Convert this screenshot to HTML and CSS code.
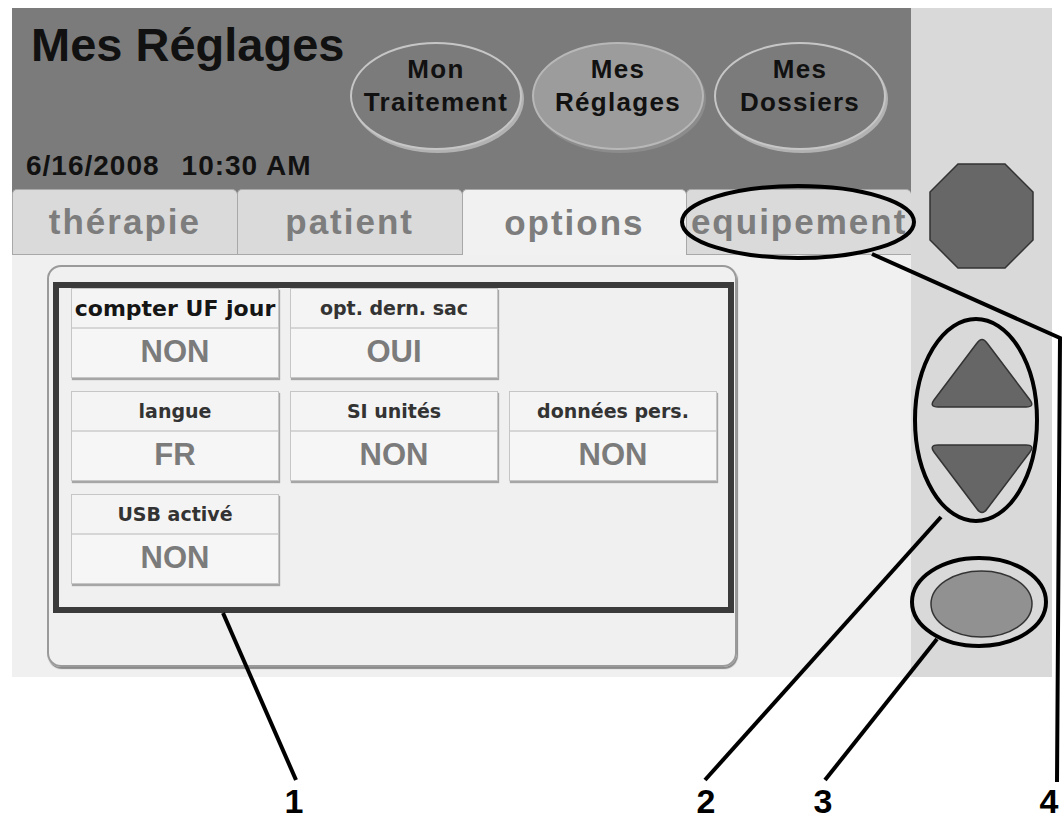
FILE: index.html
```html
<!DOCTYPE html>
<html lang="fr">
<head>
    <meta charset="UTF-8">
    <meta name="viewport" content="width=device-width, initial-scale=1.0">
    <title>Mes Réglages - options</title>
    <link rel="stylesheet" href="styles.css">
</head>
<body>
    <div class="figure">
        <div class="device">
            <div class="screen">
                <header class="topbar">
                    <div class="topbar-row">
                        <h1 class="title">Mes Réglages</h1>
                        <nav class="menu">
                            <div class="menu-btn">Mon<br>Traitement</div>
                            <div class="menu-btn is-current">Mes<br>Réglages</div>
                            <div class="menu-btn">Mes<br>Dossiers</div>
                        </nav>
                    </div>
                    <div class="clock">6/16/2008<span class="time">10:30 AM</span></div>
                </header>

                <div class="tabs">
                    <div class="tab">thérapie</div>
                    <div class="tab">patient</div>
                    <div class="tab is-active">options</div>
                    <div class="tab">equipement</div>
                </div>

                <div class="content">
                    <div class="panel">
                        <div class="frame">
                            <div class="grid">
                                <div class="cell">
                                    <div class="cell-label is-big">compter UF jour</div>
                                    <div class="cell-value">NON</div>
                                </div>
                                <div class="cell">
                                    <div class="cell-label">opt. dern. sac</div>
                                    <div class="cell-value">OUI</div>
                                </div>
                                <div class="cell-empty"></div>
                                <div class="cell">
                                    <div class="cell-label">langue</div>
                                    <div class="cell-value">FR</div>
                                </div>
                                <div class="cell">
                                    <div class="cell-label">SI unités</div>
                                    <div class="cell-value">NON</div>
                                </div>
                                <div class="cell">
                                    <div class="cell-label">données pers.</div>
                                    <div class="cell-value">NON</div>
                                </div>
                                <div class="cell">
                                    <div class="cell-label">USB activé</div>
                                    <div class="cell-value">NON</div>
                                </div>
                            </div>
                        </div>
                    </div>
                </div>
            </div>

            <!-- hardware keys beside the screen -->
            <div class="keys">
                <svg class="key-stop" width="107" height="108" viewBox="0 0 107 108">
                    <polygon points="30,2 77,2 105,30 105,78 77,106 30,106 2,78 2,30" fill="#676767" stroke="#333" stroke-width="1.5"/>
                </svg>
                <svg class="key-up" width="106" height="73" viewBox="0 0 106 73">
                    <path d="M48,7 Q53,0 58,7 L101,64 Q106,71 97,71 L9,71 Q0,71 5,64 Z" fill="#666" stroke="#333" stroke-width="1.5"/>
                </svg>
                <svg class="key-down" width="106" height="73" viewBox="0 0 106 73">
                    <path d="M9,2 L97,2 Q106,2 101,9 L58,66 Q53,73 48,66 L5,9 Q0,2 9,2 Z" fill="#666" stroke="#333" stroke-width="1.5"/>
                </svg>
                <svg class="key-ok" width="105" height="70" viewBox="0 0 105 70">
                    <ellipse cx="52.5" cy="35" rx="50.5" ry="33" fill="#919191" stroke="#333" stroke-width="1.5"/>
                </svg>
            </div>
        </div>

        <!-- numbered callouts drawn over the picture -->
        <svg class="callouts" width="1062" height="823" viewBox="0 0 1062 823">
            <g fill="none" stroke="#000" stroke-width="4">
                <ellipse cx="798" cy="222" rx="116" ry="36"/>
                <polyline points="872,254 1060,338 1057,782"/>
                <ellipse cx="976" cy="420" rx="61" ry="101"/>
                <line x1="941" y1="517" x2="705" y2="780"/>
                <ellipse cx="979" cy="602" rx="67" ry="44"/>
                <line x1="937" y1="639" x2="825" y2="780"/>
                <line x1="223" y1="613" x2="296" y2="780"/>
            </g>
            <g class="callout-num" text-anchor="middle">
                <text x="294" y="813">1</text>
                <text x="706" y="813">2</text>
                <text x="823" y="813">3</text>
                <text x="1049" y="813">4</text>
            </g>
        </svg>
    </div>
</body>
</html>
```

FILE: styles.css
```css
body {
    margin: 0;
    background-color: #ffffff;
    font-family: 'Liberation Sans', Arial, sans-serif;
    overflow: hidden;
}
.figure {
    position: relative;
    width: 1062px;
    height: 823px;
}
.device {
    display: flex;
    padding: 8px 0 0 12px;
}
.screen {
    width: 899px;
    display: flex;
    flex-direction: column;
}

/* top bar */
.topbar {
    height: 181px;
    box-sizing: border-box;
    background-color: #7b7b7b;
    padding: 13px 0 0 14px;
}
.topbar-row {
    display: flex;
}
.title {
    flex: 0 0 324px;
    margin: 0;
    padding-left: 5px;
    box-sizing: border-box;
    font-size: 47px;
    line-height: 1;
    font-weight: bold;
    color: #111;
}
.menu {
    display: flex;
    gap: 10px;
    margin-top: 21px;
}
.menu-btn {
    width: 172px;
    height: 108px;
    box-sizing: border-box;
    border-radius: 50%;
    border: 2px solid #c6c6c6;
    box-shadow: 2px 3px 0 #b2b2b2;
    background-color: #7b7b7b;
    padding-top: 9px;
    text-align: center;
    font-size: 26px;
    line-height: 33px;
    letter-spacing: 1.3px;
    font-weight: bold;
    color: #111;
}
.menu-btn.is-current {
    background-color: #9c9c9c;
    border-color: #b8b8b8;
    box-shadow: 2px 3px 0 #8c8c8c;
}
.clock {
    font-size: 28px;
    line-height: 32px;
    letter-spacing: 1px;
    font-weight: bold;
    color: #111;
}
.time {
    margin-left: 22px;
}

/* tabs */
.tabs {
    display: grid;
    grid-template-columns: repeat(4, 1fr);
    height: 66px;
    background-color: #7b7b7b;
}
.tab {
    display: flex;
    align-items: center;
    justify-content: center;
    overflow: hidden;
    white-space: nowrap;
    background-color: #dadada;
    border: 1px solid #a8a8a8;
    border-right: none;
    border-radius: 5px 5px 0 0;
    font-size: 35px;
    letter-spacing: 2px;
    font-weight: bold;
    color: #7d7d7d;
}
.tab.is-active {
    background-color: #f1f1f1;
    border-bottom: none;
}

/* option cards */
.content {
    height: 422px;
    box-sizing: border-box;
    background-color: #f0f0f0;
    padding: 10px 0 0 35px;
}
.panel {
    width: 690px;
    box-sizing: border-box;
    border: 2px solid #9a9a9a;
    border-radius: 14px;
    box-shadow: 1px 2px 1px #8a8a8a;
    padding: 15px 1px 52px 4px;
}
.frame {
    border: 6px solid #3b3b3b;
    padding: 0 11px 23px 12px;
}
.grid {
    display: grid;
    grid-template-columns: repeat(3, 208px);
    grid-auto-rows: 90px;
    column-gap: 11px;
    row-gap: 13px;
}
.cell {
    display: flex;
    flex-direction: column;
    border: 1px solid #c6c6c6;
    box-shadow: 1px 2px 1px #a6a6a6;
    background-color: #f4f4f4;
}
.cell-label {
    height: 38px;
    display: flex;
    align-items: center;
    justify-content: center;
    white-space: nowrap;
    font-family: 'DejaVu Sans', Verdana, sans-serif;
    font-size: 19px;
    font-weight: bold;
    color: #333;
}
.cell-label.is-big {
    font-size: 22px;
    color: #151515;
}
.cell-value {
    flex: 1;
    display: flex;
    align-items: center;
    justify-content: center;
    border-top: 2px solid #d6d6d6;
    background-color: #f6f6f6;
    padding-bottom: 3px;
    font-size: 31px;
    font-weight: bold;
    color: #7b7b7b;
}

/* side keys */
.keys {
    width: 141px;
    height: 669px;
    background-color: #d9d9d9;
    display: flex;
    flex-direction: column;
    align-items: center;
}
.key-stop {
    margin-top: 154px;
}
.key-up {
    margin-top: 66px;
}
.key-down {
    margin-top: 34px;
}
.key-ok {
    margin-top: 53px;
}

/* callouts */
.callouts {
    position: absolute;
    left: 0;
    top: 0;
}
.callout-num {
    font-family: 'Liberation Sans', Arial, sans-serif;
    font-weight: bold;
    font-size: 34px;
    fill: #000;
}
```
